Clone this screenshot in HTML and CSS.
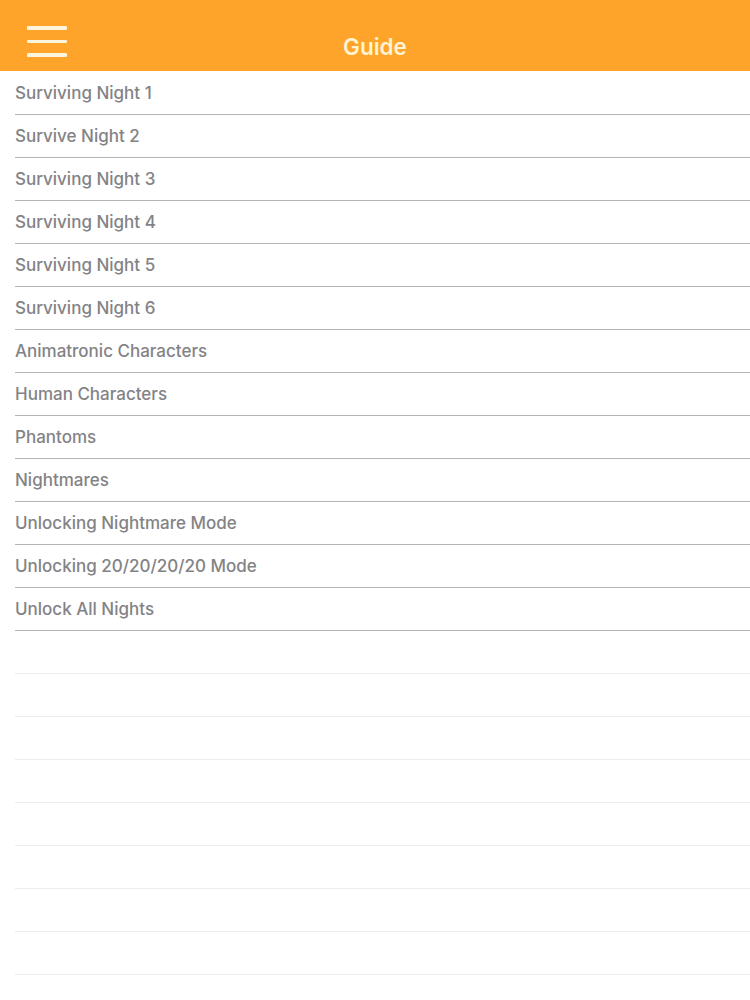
FILE: index.html
```html
<!DOCTYPE html>
<html>
<head>
<meta charset="utf-8">
<link rel="stylesheet" href="styles.css">
</head>
<body>
<header class="bar">
  <div class="menu"><span></span><span></span><span></span></div>
  <div class="title">Guide</div>
</header>
<ul class="list">
  <li>Surviving Night 1</li>
  <li>Survive Night 2</li>
  <li>Surviving Night 3</li>
  <li>Surviving Night 4</li>
  <li>Surviving Night 5</li>
  <li>Surviving Night 6</li>
  <li>Animatronic Characters</li>
  <li>Human Characters</li>
  <li>Phantoms</li>
  <li>Nightmares</li>
  <li>Unlocking Nightmare Mode</li>
  <li>Unlocking 20/20/20/20 Mode</li>
  <li>Unlock All Nights</li>
  <li class="empty"></li>
  <li class="empty"></li>
  <li class="empty"></li>
  <li class="empty"></li>
  <li class="empty"></li>
  <li class="empty"></li>
  <li class="empty"></li>
  <li class="empty"></li>
</ul>
</body>
</html>
```
FILE: styles.css
```css
html, body {
  margin: 0;
  padding: 0;
  background: #ffffff;
  font-family: "Liberation Sans", Arial, sans-serif;
}
.bar {
  height: 71px;
  box-sizing: border-box;
  padding-top: 22px;
  background: #ffa42a;
  display: flex;
  align-items: center;
  justify-content: center;
  position: relative;
}
.menu {
  position: absolute;
  left: 27px;
  top: 26px;
  width: 40px;
  display: flex;
  flex-direction: column;
  gap: 10px;
}
.menu span {
  display: block;
  height: 3.5px;
  background: #fff5dc;
  border-radius: 1px;
}
.title {
  color: #fff3d2;
  font-family: Inter, "Liberation Sans", sans-serif;
  font-size: 22.5px;
  font-weight: 600;
}
.list {
  list-style: none;
  margin: 0;
  padding: 1px 0 0 15px;
}
.list li {
  height: 42px;
  border-bottom: 1px solid #b4b4b4;
  display: flex;
  align-items: center;
  color: #838386;
  font-family: Inter, "Liberation Sans", sans-serif;
  font-size: 17px;
  font-weight: 500;
  box-sizing: content-box;
}
.list li.empty {
  border-bottom-color: #ececec;
}
```
